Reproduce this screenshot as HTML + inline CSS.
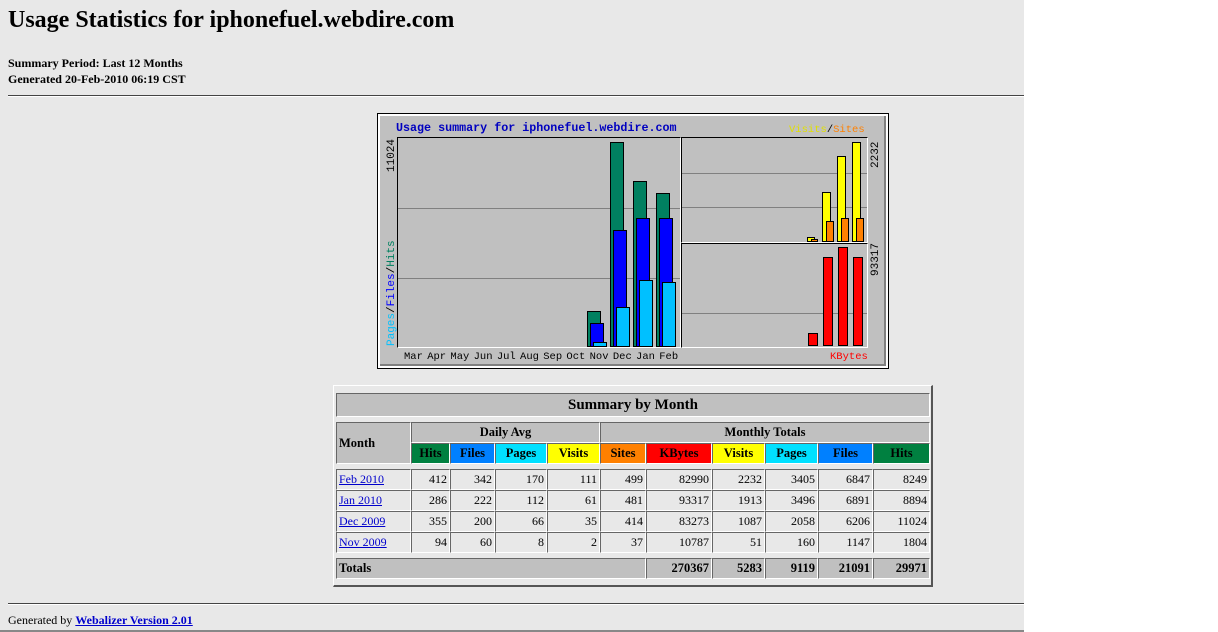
<!DOCTYPE html>
<html><head><meta charset="utf-8"><style>
body{margin:0;width:1218px;height:632px;background:#fff;position:relative;overflow:hidden;font-family:"Liberation Serif",serif;}
#pg{position:absolute;left:0;top:0;width:1024px;height:632px;background:#e8e8e8;}
.a{position:absolute;}
.hr{position:absolute;left:8px;width:1016px;height:0;border-top:1px solid #444;border-bottom:1px solid #fff;}
.m{font-family:"Liberation Mono","DejaVu Sans Mono",monospace;font-size:11px;font-weight:bold;}
.b{position:absolute;border:1px solid #000;box-sizing:border-box;}
.g{position:absolute;height:1px;background:#808080;}
.c{position:absolute;box-sizing:border-box;border-top:1px solid #666;border-left:1px solid #666;border-right:1px solid #fff;border-bottom:1px solid #fff;background:#e8e8e8;font-size:12px;line-height:18px;text-align:right;padding-right:2px;}
.h{background:#c0c0c0;font-weight:bold;text-align:center;padding:0;font-size:12.5px;}
.L{text-align:left;padding-left:2px;}
a{color:#00c;}
</style></head><body><div id="pg">
<div class="a" style="left:8px;top:7px;font-size:24px;font-weight:bold;">Usage Statistics for iphonefuel.webdire.com</div>
<div class="a" style="left:8px;top:55px;font-size:12px;font-weight:bold;line-height:16px;">Summary Period: Last 12 Months<br>Generated 20-Feb-2010 06:19 CST</div>
<div class="hr" style="top:95px"></div>

<!-- chart -->
<div class="a" style="left:377px;top:113px;width:512px;height:256px;background:#000;"></div>
<div class="a" style="left:378px;top:114px;width:510px;height:254px;background:#fff;"></div>
<div class="a" style="left:380px;top:116px;width:506px;height:250px;background:#c0c0c0;border-right:2px solid #808080;border-bottom:2px solid #808080;box-sizing:border-box;"></div>
<div class="a m" style="left:396px;top:121px;color:#0000c0;font-size:11.7px;">Usage summary for iphonefuel.webdire.com</div>
<div class="a m" style="left:789px;top:124px;color:#e0e000;font-weight:normal;font-size:10.5px;">Visits<span style="color:#000">/</span><span style="color:#ff8000">Sites</span></div>
<div class="a m" style="left:830px;top:351px;color:#ff0000;font-weight:normal;font-size:10.5px;">KBytes</div>
<div class="a m" style="left:404px;top:351px;font-weight:normal;font-size:10.5px;word-spacing:-2px;">Mar Apr May Jun Jul Aug Sep Oct Nov Dec Jan Feb</div>
<div class="a m" style="left:386px;top:172px;transform:rotate(-90deg);transform-origin:0 0;font-weight:normal;">11024</div>
<div class="a m" style="left:386px;top:346px;transform:rotate(-90deg);transform-origin:0 0;font-weight:normal;"><span style="color:#00c0ff">Pages</span>/<span style="color:#0000ff">Files</span>/<span style="color:#008060">Hits</span></div>
<div class="a m" style="left:870px;top:168px;transform:rotate(-90deg);transform-origin:0 0;font-weight:normal;">2232</div>
<div class="a m" style="left:870px;top:276px;transform:rotate(-90deg);transform-origin:0 0;font-weight:normal;">93317</div>

<div class="a" style="left:397px;top:137px;width:284px;height:211px;border-top:1px solid #000;border-left:1px solid #000;border-right:1px solid #fff;border-bottom:1px solid #fff;box-sizing:border-box;"></div>
<div class="a" style="left:681px;top:137px;width:187px;height:106px;border-top:1px solid #000;border-left:1px solid #000;border-right:1px solid #fff;border-bottom:1px solid #fff;box-sizing:border-box;"></div>
<div class="a" style="left:681px;top:243px;width:187px;height:105px;border-top:1px solid #000;border-left:1px solid #000;border-right:1px solid #fff;border-bottom:1px solid #fff;box-sizing:border-box;"></div>
<div class="g" style="left:398px;top:208px;width:282px"></div>
<div class="g" style="left:398px;top:278px;width:282px"></div>
<div class="g" style="left:682px;top:173px;width:185px"></div>
<div class="g" style="left:682px;top:207px;width:185px"></div>
<div class="g" style="left:682px;top:313px;width:185px"></div>

<div class="b" style="left:587px;top:311px;width:14px;height:36px;background:#008060"></div>
<div class="b" style="left:590px;top:323px;width:14px;height:24px;background:#0000ff"></div>
<div class="b" style="left:593px;top:342px;width:14px;height:5px;background:#00c0ff"></div>
<div class="b" style="left:610px;top:142px;width:14px;height:205px;background:#008060"></div>
<div class="b" style="left:613px;top:230px;width:14px;height:117px;background:#0000ff"></div>
<div class="b" style="left:616px;top:307px;width:14px;height:40px;background:#00c0ff"></div>
<div class="b" style="left:633px;top:181px;width:14px;height:166px;background:#008060"></div>
<div class="b" style="left:636px;top:218px;width:14px;height:129px;background:#0000ff"></div>
<div class="b" style="left:639px;top:280px;width:14px;height:67px;background:#00c0ff"></div>
<div class="b" style="left:656px;top:193px;width:14px;height:154px;background:#008060"></div>
<div class="b" style="left:659px;top:218px;width:14px;height:129px;background:#0000ff"></div>
<div class="b" style="left:662px;top:282px;width:14px;height:65px;background:#00c0ff"></div>

<div class="b" style="left:807px;top:237px;width:8px;height:5px;background:#ffff00"></div>
<div class="b" style="left:811px;top:239px;width:7px;height:3px;background:#ff8000"></div>
<div class="b" style="left:822px;top:192px;width:9px;height:50px;background:#ffff00"></div>
<div class="b" style="left:826px;top:221px;width:8px;height:21px;background:#ff8000"></div>
<div class="b" style="left:837px;top:156px;width:9px;height:86px;background:#ffff00"></div>
<div class="b" style="left:841px;top:218px;width:8px;height:24px;background:#ff8000"></div>
<div class="b" style="left:852px;top:142px;width:9px;height:100px;background:#ffff00"></div>
<div class="b" style="left:856px;top:218px;width:8px;height:24px;background:#ff8000"></div>

<div class="b" style="left:808px;top:333px;width:10px;height:13px;background:#ff0000"></div>
<div class="b" style="left:823px;top:257px;width:10px;height:89px;background:#ff0000"></div>
<div class="b" style="left:838px;top:247px;width:10px;height:99px;background:#ff0000"></div>
<div class="b" style="left:853px;top:257px;width:10px;height:89px;background:#ff0000"></div>

<!-- table -->
<div class="a" style="left:333px;top:385px;width:600px;height:202px;box-sizing:border-box;border-top:1px solid #fff;border-left:1px solid #fff;border-right:2px solid #555;border-bottom:2px solid #555;"></div>
<div class="c h" style="left:336px;top:393px;width:594px;height:24px;font-size:15px;line-height:22px;">Summary by Month</div>
<div class="c h L" style="left:336px;top:422px;width:75px;height:42px;line-height:40px;">Month</div>
<div class="c h" style="left:411px;top:422px;width:189px;height:21px;">Daily Avg</div>
<div class="c h" style="left:600px;top:422px;width:330px;height:21px;">Monthly Totals</div>
<div class="c h" style="left:411px;top:443px;width:39px;height:21px;background:#008040">Hits</div>
<div class="c h" style="left:450px;top:443px;width:45px;height:21px;background:#0080ff">Files</div>
<div class="c h" style="left:495px;top:443px;width:52px;height:21px;background:#00e0ff">Pages</div>
<div class="c h" style="left:547px;top:443px;width:53px;height:21px;background:#ffff00">Visits</div>
<div class="c h" style="left:600px;top:443px;width:46px;height:21px;background:#ff8000">Sites</div>
<div class="c h" style="left:646px;top:443px;width:66px;height:21px;background:#ff0000">KBytes</div>
<div class="c h" style="left:712px;top:443px;width:53px;height:21px;background:#ffff00">Visits</div>
<div class="c h" style="left:765px;top:443px;width:53px;height:21px;background:#00e0ff">Pages</div>
<div class="c h" style="left:818px;top:443px;width:55px;height:21px;background:#0080ff">Files</div>
<div class="c h" style="left:873px;top:443px;width:57px;height:21px;background:#008040">Hits</div>

<!-- rows -->
<div class="c L" style="left:336px;top:469px;width:75px;height:21px;"><a href="#">Feb 2010</a></div>
<div class="c" style="left:411px;top:469px;width:39px;height:21px;">412</div>
<div class="c" style="left:450px;top:469px;width:45px;height:21px;">342</div>
<div class="c" style="left:495px;top:469px;width:52px;height:21px;">170</div>
<div class="c" style="left:547px;top:469px;width:53px;height:21px;">111</div>
<div class="c" style="left:600px;top:469px;width:46px;height:21px;">499</div>
<div class="c" style="left:646px;top:469px;width:66px;height:21px;">82990</div>
<div class="c" style="left:712px;top:469px;width:53px;height:21px;">2232</div>
<div class="c" style="left:765px;top:469px;width:53px;height:21px;">3405</div>
<div class="c" style="left:818px;top:469px;width:55px;height:21px;">6847</div>
<div class="c" style="left:873px;top:469px;width:57px;height:21px;">8249</div>

<div class="c L" style="left:336px;top:490px;width:75px;height:21px;"><a href="#">Jan 2010</a></div>
<div class="c" style="left:411px;top:490px;width:39px;height:21px;">286</div>
<div class="c" style="left:450px;top:490px;width:45px;height:21px;">222</div>
<div class="c" style="left:495px;top:490px;width:52px;height:21px;">112</div>
<div class="c" style="left:547px;top:490px;width:53px;height:21px;">61</div>
<div class="c" style="left:600px;top:490px;width:46px;height:21px;">481</div>
<div class="c" style="left:646px;top:490px;width:66px;height:21px;">93317</div>
<div class="c" style="left:712px;top:490px;width:53px;height:21px;">1913</div>
<div class="c" style="left:765px;top:490px;width:53px;height:21px;">3496</div>
<div class="c" style="left:818px;top:490px;width:55px;height:21px;">6891</div>
<div class="c" style="left:873px;top:490px;width:57px;height:21px;">8894</div>

<div class="c L" style="left:336px;top:511px;width:75px;height:21px;"><a href="#">Dec 2009</a></div>
<div class="c" style="left:411px;top:511px;width:39px;height:21px;">355</div>
<div class="c" style="left:450px;top:511px;width:45px;height:21px;">200</div>
<div class="c" style="left:495px;top:511px;width:52px;height:21px;">66</div>
<div class="c" style="left:547px;top:511px;width:53px;height:21px;">35</div>
<div class="c" style="left:600px;top:511px;width:46px;height:21px;">414</div>
<div class="c" style="left:646px;top:511px;width:66px;height:21px;">83273</div>
<div class="c" style="left:712px;top:511px;width:53px;height:21px;">1087</div>
<div class="c" style="left:765px;top:511px;width:53px;height:21px;">2058</div>
<div class="c" style="left:818px;top:511px;width:55px;height:21px;">6206</div>
<div class="c" style="left:873px;top:511px;width:57px;height:21px;">11024</div>

<div class="c L" style="left:336px;top:532px;width:75px;height:21px;"><a href="#">Nov 2009</a></div>
<div class="c" style="left:411px;top:532px;width:39px;height:21px;">94</div>
<div class="c" style="left:450px;top:532px;width:45px;height:21px;">60</div>
<div class="c" style="left:495px;top:532px;width:52px;height:21px;">8</div>
<div class="c" style="left:547px;top:532px;width:53px;height:21px;">2</div>
<div class="c" style="left:600px;top:532px;width:46px;height:21px;">37</div>
<div class="c" style="left:646px;top:532px;width:66px;height:21px;">10787</div>
<div class="c" style="left:712px;top:532px;width:53px;height:21px;">51</div>
<div class="c" style="left:765px;top:532px;width:53px;height:21px;">160</div>
<div class="c" style="left:818px;top:532px;width:55px;height:21px;">1147</div>
<div class="c" style="left:873px;top:532px;width:57px;height:21px;">1804</div>

<div class="c h L" style="left:336px;top:558px;width:310px;height:21px;">Totals</div>
<div class="c h" style="left:646px;top:558px;width:66px;height:21px;text-align:right;padding-right:2px;">270367</div>
<div class="c h" style="left:712px;top:558px;width:53px;height:21px;text-align:right;padding-right:2px;">5283</div>
<div class="c h" style="left:765px;top:558px;width:53px;height:21px;text-align:right;padding-right:2px;">9119</div>
<div class="c h" style="left:818px;top:558px;width:55px;height:21px;text-align:right;padding-right:2px;">21091</div>
<div class="c h" style="left:873px;top:558px;width:57px;height:21px;text-align:right;padding-right:2px;">29971</div>

<div class="hr" style="top:603px"></div>
<div class="a" style="left:8px;top:613px;font-size:12px;">Generated by <a href="#" style="font-weight:bold;">Webalizer Version 2.01</a></div>
<div class="a" style="left:0;top:630px;width:1024px;height:2px;background:#888;"></div>
</div></body></html>
